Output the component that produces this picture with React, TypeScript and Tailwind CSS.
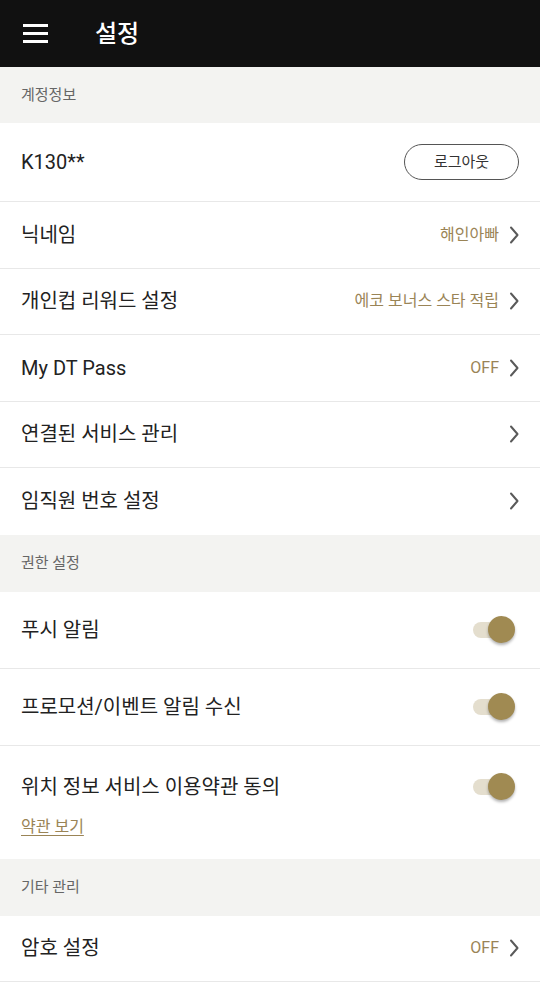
import React from 'react';

const font = { fontFamily: 'Roboto, "Noto Sans CJK KR", "Noto Sans", sans-serif' };

const Chevron: React.FC = () => (
  <svg width="12" height="20" viewBox="0 0 12 20" className="ml-[9px] shrink-0">
    <path d="M3 2.5 L9.5 10 L3 17.5" fill="none" stroke="#5a5a5a" strokeWidth="2" strokeLinecap="round" strokeLinejoin="round" />
  </svg>
);

const Toggle: React.FC = () => (
  <div className="relative w-[42px] h-[28px] shrink-0">
    <div className="absolute left-0 top-[6px] w-[34px] h-[16px] rounded-full bg-[#e4dece]" />
    <div className="absolute left-[15px] top-0 w-[27px] h-[27px] rounded-full bg-[#a08a52] shadow-[0_2px_3px_rgba(0,0,0,0.3)]" />
  </div>
);

const SectionHead: React.FC<{ title: string; h?: string }> = ({ title, h = 'h-[57px]' }) => (
  <div className={`${h} bg-[#f3f3f1] flex items-center px-[21px] text-[15px] text-[#666]`}>{title}</div>
);

const Row: React.FC<{ label: string; value?: string; last?: boolean }> = ({ label, value, last }) => (
  <div className={`h-[66.5px] flex items-center justify-between pl-[21px] pr-[20px] bg-white ${last ? '' : 'border-b border-[#e8e8e8]'}`}>
    <span className="text-[20px] text-[#222]">{label}</span>
    <div className="flex items-center">
      {value && <span className="text-[16px] text-[#9a8456]">{value}</span>}
      <Chevron />
    </div>
  </div>
);

const ToggleRow: React.FC<{ label: string }> = ({ label }) => (
  <div className="h-[77px] flex items-center justify-between pl-[21px] pr-[25px] border-b border-[#e8e8e8] bg-white">
    <span className="text-[20px] text-[#222]">{label}</span>
    <Toggle />
  </div>
);

export default function App() {
  return (
    <div className="w-[540px] min-h-[997px] bg-white" style={font}>
      <header className="h-[67px] bg-[#111111] flex items-center">
        <div className="ml-[23px] w-[25px] flex flex-col gap-[5px]">
          <span className="block h-[3px] bg-white" />
          <span className="block h-[3px] bg-white" />
          <span className="block h-[3px] bg-white" />
        </div>
        <h1 className="ml-[47px] text-[24px] text-white font-medium">설정</h1>
      </header>

      <SectionHead title="계정정보" h="h-[56px]" />
      <div className="h-[79px] flex items-center justify-between pl-[21px] pr-[21px] border-b border-[#e8e8e8]">
        <span className="text-[20px] text-[#222]">K130**</span>
        <button className="w-[115px] h-[36px] rounded-full border-[1.5px] border-[#555] text-[15px] text-[#333] flex items-center justify-center">
          로그아웃
        </button>
      </div>
      <Row label="닉네임" value="해인아빠" />
      <Row label="개인컵 리워드 설정" value="에코 보너스 스타 적립" />
      <Row label="My DT Pass" value="OFF" />
      <Row label="연결된 서비스 관리" />
      <Row label="임직원 번호 설정" last />

      <SectionHead title="권한 설정" />
      <ToggleRow label="푸시 알림" />
      <ToggleRow label="프로모션/이벤트 알림 수신" />
      <div className="h-[113px] pl-[21px] pr-[25px] pt-[26px] bg-white">
        <div className="flex items-center justify-between">
          <span className="text-[20px] text-[#222]">위치 정보 서비스 이용약관 동의</span>
          <Toggle />
        </div>
        <a className="block mt-[13px] text-[16px] text-[#9a8456] underline underline-offset-[3px] w-fit">약관 보기</a>
      </div>

      <SectionHead title="기타 관리" />
      <Row label="암호 설정" value="OFF" />
    </div>
  );
}
